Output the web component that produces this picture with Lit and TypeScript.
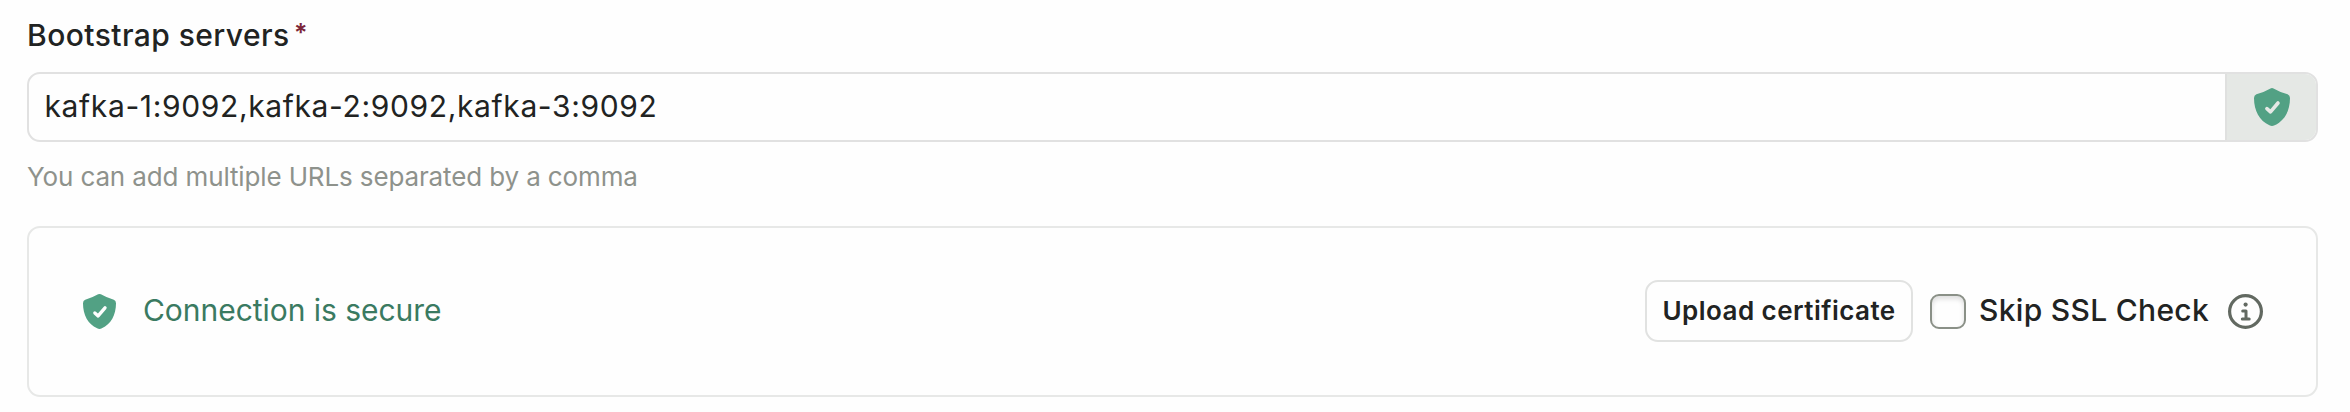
import { LitElement, html, css } from "lit";
import { customElement, property } from "lit/decorators.js";

@customElement("shield-icon")
export class ShieldIcon extends LitElement {
  static styles = css`
    :host { display: block; flex: none; }
    svg { display: block; width: 100%; height: 100%; }
    .body { fill: #52a184; }
    .tick { fill: none; stroke: var(--tick, #fefefe); stroke-width: 3.6; stroke-linecap: round; stroke-linejoin: round; }
  `;
  render() {
    return html`<svg viewBox="0 0 36 38" preserveAspectRatio="none" aria-hidden="true">
      <path class="body" d="M16.5 .4Q18-.3 19.5 .4Q26.5 4.4 33.6 6.3Q36 7.2 36 10C36 23 30.5 32.6 20.6 37.3Q18 38.5 15.4 37.3C5.5 32.6 0 23 0 10Q0 7.2 2.4 6.3Q9.5 4.4 16.5 .4Z"/>
      <path class="tick" d="M12.9 20.6L16.5 23.8L24 15"/>
    </svg>`;
  }
}

@customElement("app-root")
export class AppRoot extends LitElement {
  @property() servers = "kafka-1:9092,kafka-2:9092,kafka-3:9092";

  static styles = css`
    :host {
      display: block;
      box-sizing: border-box;
      height: 412px;
      padding: 17px 32px 0 27px;
      background: #fefefe;
      color: #212322;
      font-family: Inter, "Noto Sans", sans-serif;
      font-size: 30px;
    }
    * { box-sizing: border-box; }
    .label {
      display: flex;
      gap: 4px;
      height: 36px;
      line-height: 36px;
      font-weight: 500;
      letter-spacing: 0.44px;
    }
    .required {
      display: block;
      width: 14px;
      height: 14px;
      margin-top: 4px;
      font-size: 25px;
      font-weight: 600;
      line-height: 24px;
      letter-spacing: 0;
      text-align: center;
      color: #7c2639;
    }
    .field {
      display: flex;
      height: 70px;
      margin-top: 19px;
      border: 2px solid #e1e1e1;
      border-radius: 13px;
      overflow: hidden;
    }
    .value {
      flex: 1;
      padding: 0 0 2px 15.5px;
      line-height: 64px;
      letter-spacing: 0.635px;
    }
    .addon {
      display: flex;
      align-items: center;
      justify-content: center;
      width: 91px;
      border-left: 2px solid #dfe0df;
      background: #e5e8e5;
      --tick: #e5e8e5;
    }
    .addon shield-icon { width: 36px; height: 38px; }
    .hint {
      height: 34px;
      margin-top: 18px;
      line-height: 33px;
      font-size: 26px;
      letter-spacing: -0.13px;
      color: #8e928c;
    }
    .card {
      display: flex;
      align-items: center;
      justify-content: space-between;
      height: 171px;
      margin-top: 32px;
      padding: 0 53px 0 54px;
      border: 2px solid #e7e8e7;
      border-radius: 13px;
    }
    .status, .actions, .check { display: flex; align-items: center; }
    .status { gap: 27px; color: #3a7a61; letter-spacing: -0.04px; }
    .status shield-icon { width: 33px; height: 35px; }
    .text { padding-bottom: 3px; line-height: 36px; }
    .upload {
      width: 268px;
      height: 62px;
      margin: 0 17px 1px 0;
      padding: 0;
      border: 2px solid #e1e2e1;
      border-radius: 13px;
      background: #fefefe;
      color: inherit;
      font: 600 26px/34px Inter, "Noto Sans", sans-serif;
      letter-spacing: 0.46px;
      white-space: nowrap;
    }
    .check { gap: 13px; font-weight: 500; letter-spacing: 0.3px; }
    .box {
      width: 36px;
      height: 35px;
      border: 2px solid #8a9087;
      border-radius: 9px;
      box-shadow: inset 0 3px 5px rgba(0, 0, 0, 0.13);
    }
    .info { display: block; width: 35px; height: 35px; margin-left: 19px; }
  `;

  render() {
    return html`
      <div class="label"><span>Bootstrap servers</span><span class="required">*</span></div>
      <div class="field">
        <div class="value">${this.servers}</div>
        <div class="addon"><shield-icon></shield-icon></div>
      </div>
      <div class="hint">You can add multiple URLs separated by a comma</div>
      <section class="card">
        <div class="status">
          <shield-icon></shield-icon>
          <span class="text">Connection is secure</span>
        </div>
        <div class="actions">
          <button class="upload">Upload certificate</button>
          <div class="check"><span class="box"></span><span class="text">Skip SSL Check</span></div>
          <svg class="info" viewBox="0 0 35 35" fill="none" stroke="#626961">
            <circle cx="17.5" cy="17.5" r="15.9" stroke-width="3.2"/>
            <circle cx="17.6" cy="10.6" r="2.1" fill="#626961" stroke="none"/>
            <path d="M14.7 17.1H18V25M14.3 25H21.2" stroke-width="3" stroke-linecap="round" stroke-linejoin="round"/>
          </svg>
        </div>
      </section>
    `;
  }
}
